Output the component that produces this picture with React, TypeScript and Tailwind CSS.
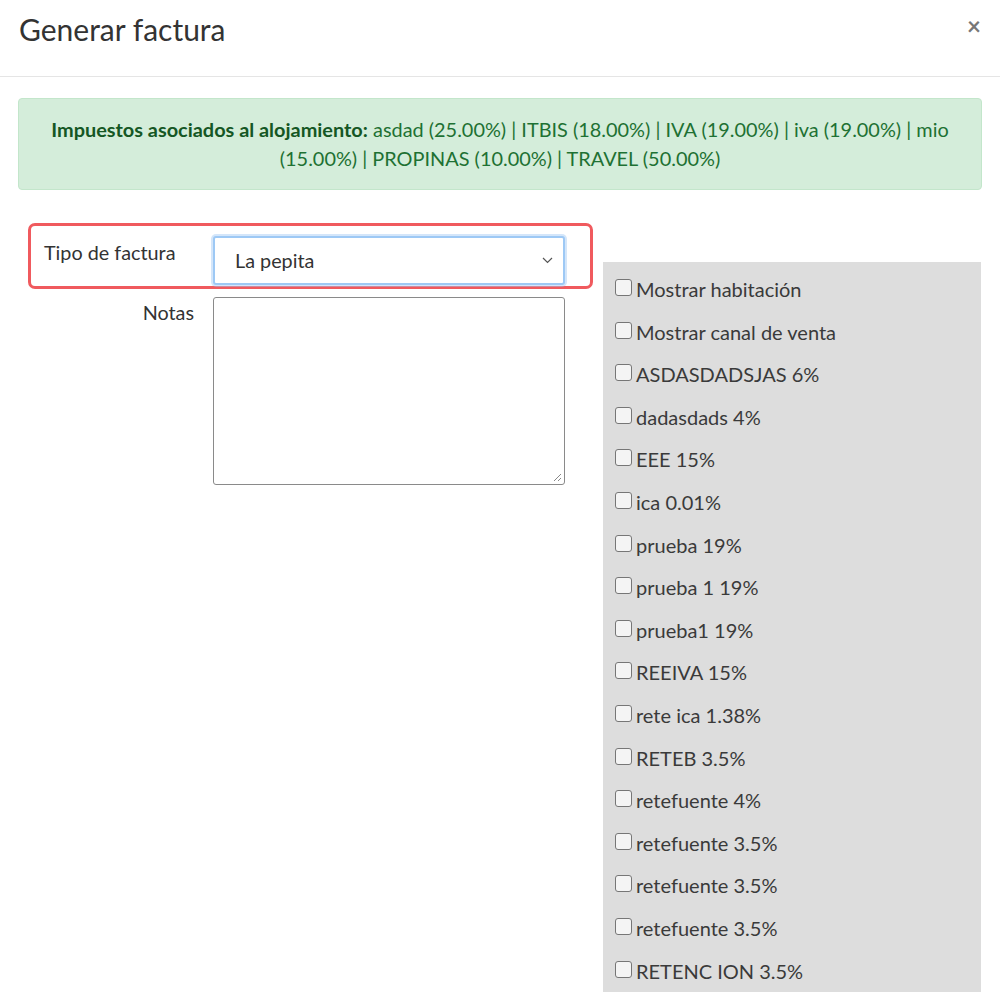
import React from 'react'

const impuestos = [
  'Mostrar habitación',
  'Mostrar canal de venta',
  'ASDASDADSJAS 6%',
  'dadasdads 4%',
  'EEE 15%',
  'ica 0.01%',
  'prueba 19%',
  'prueba 1 19%',
  'prueba1 19%',
  'REEIVA 15%',
  'rete ica 1.38%',
  'RETEB 3.5%',
  'retefuente 4%',
  'retefuente 3.5%',
  'retefuente 3.5%',
  'retefuente 3.5%',
  'RETENC ION 3.5%',
]

function Checkbox() {
  return <span className="mt-[2px] inline-block h-[17px] w-[17px] shrink-0 rounded-[3px] border border-[#767676] bg-[#f4f4f4]" />
}

export default function App() {
  return (
    <div className="h-[992px] overflow-hidden bg-white font-['Lato','Noto_Sans',sans-serif] text-[#333]">
      <div className="flex h-[77px] items-start justify-between border-b border-[#e5e5e5] pl-[19px] pr-[19px] pt-[9px]">
        <h1 className="text-[30px] leading-[40px] text-[#333]">Generar factura</h1>
        <span className="pt-[2px] text-[24px] font-bold leading-[30px] text-[#777]">×</span>
      </div>

      <div className="px-[18px] pt-[21px]">
        <div className="rounded-[4px] border border-[#c3e6cb] bg-[#d4edda] px-[26px] py-[16px] text-center text-[19.9px] leading-[29px] text-[#1e7133]">
          <b className="text-[#155724]">Impuestos asociados al alojamiento:</b> asdad (25.00%) | ITBIS (18.00%) | IVA (19.00%) | iva (19.00%) | mio (15.00%) | PROPINAS (10.00%) | TRAVEL (50.00%)
        </div>

        <div className="mt-[33px] flex">
          <div className="ml-[10px] w-[565px] shrink-0">
            <div className="flex h-[66px] rounded-[7px] border-[3px] border-[#f05a5e] pt-[10px]">
              <label className="w-[182px] shrink-0 pl-[13px] pt-[3px] text-[19.8px] leading-[26px]">Tipo de factura</label>
              <div className="flex h-[49px] w-[352px] shrink-0 items-center justify-between rounded-[3px] border-2 border-[#9ec9f5] bg-white pl-[20px] pr-[10px] shadow-[0_0_0_2px_rgba(160,200,245,0.45)]">
                <span className="text-[19.8px]">La pepita</span>
                <svg width="11" height="7" viewBox="0 0 11 7" fill="none" stroke="#555" strokeWidth="1.2">
                  <path d="M1 1 L5.5 5.5 L10 1" />
                </svg>
              </div>
            </div>
            <div className="mt-[8px] flex">
              <label className="w-[185px] shrink-0 pr-[19px] pt-[2px] text-right text-[19.8px] leading-[26px]">Notas</label>
              <div className="relative h-[188px] w-[352px] shrink-0 rounded-[3px] border border-[#8a8a8a] bg-white">
                <svg className="absolute bottom-[2px] right-[2px]" width="9" height="9" viewBox="0 0 9 9" stroke="#888" strokeWidth="1">
                  <path d="M1 8 L8 1 M5 8 L8 5" />
                </svg>
              </div>
            </div>
          </div>

          <div className="ml-[10px] mt-[39px] h-[800px] w-[378px] shrink-0 bg-[#dddddd] pl-[12px] pt-[15px]">
            {impuestos.map((t, i) => (
              <div key={i} className="flex h-[42.6px] items-start gap-[4px] text-[20px] leading-[24px] text-[#3a3a3a]">
                <Checkbox />
                <span>{t}</span>
              </div>
            ))}
          </div>
        </div>
      </div>
    </div>
  )
}
